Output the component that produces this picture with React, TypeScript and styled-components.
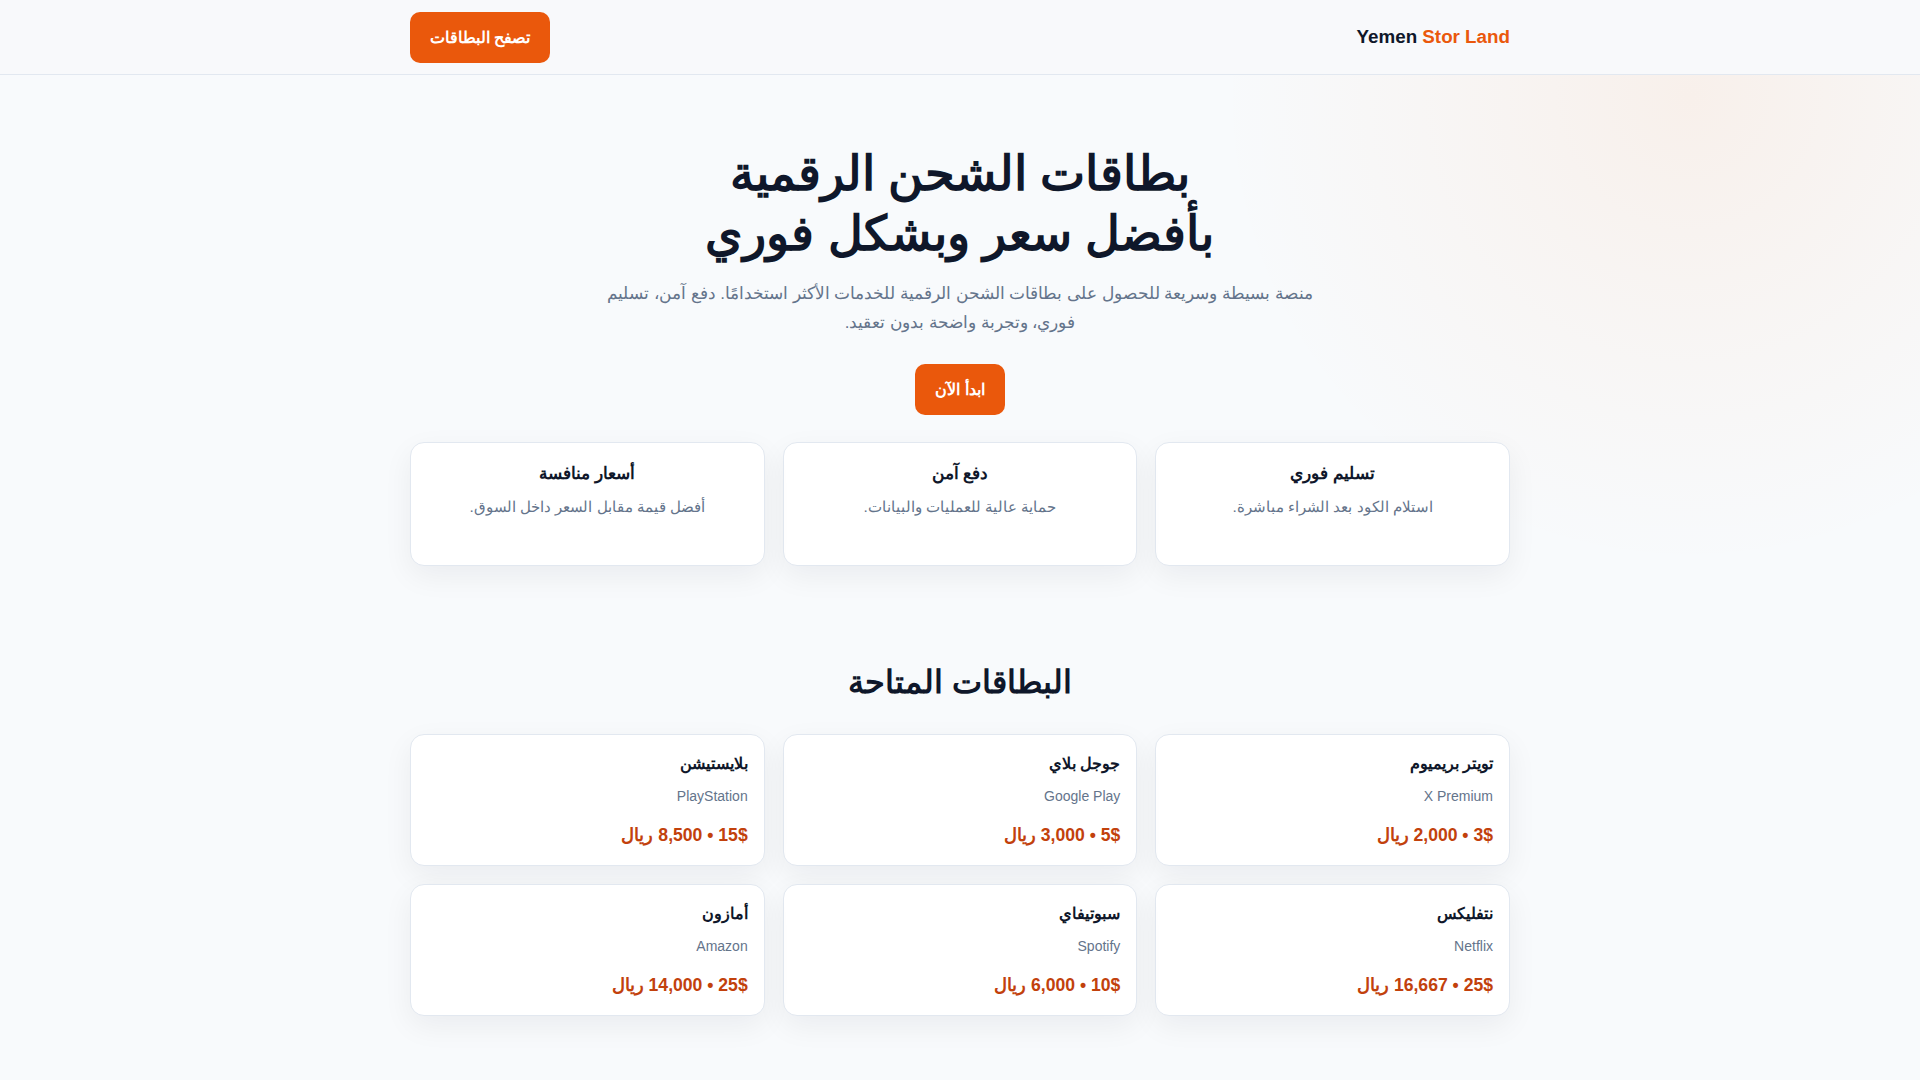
import React, { FC } from 'react';
import styled, { createGlobalStyle } from 'styled-components';

const GlobalStyle = createGlobalStyle`
  html, body {
    margin: 0;
    padding: 0;
    background: #f8fafc;
  }
  body {
    font-family: "Liberation Sans", Arial, sans-serif;
    color: #0f172a;
  }
  * {
    box-sizing: border-box;
  }
`;

const Page = styled.div`
  direction: rtl;
  min-height: 1080px;
  background:
    radial-gradient(circle at 88% 9%, rgba(249, 115, 22, 0.075), rgba(249, 115, 22, 0.03) 260px, rgba(249, 115, 22, 0) 470px),
    #f8fafc;
`;

const Header = styled.header`
  height: 75px;
  border-bottom: 1px solid #e2e8f0;
  background: #f8f9fb;
`;

const Container = styled.div`
  max-width: 1100px;
  margin: 0 auto;
  height: 100%;
`;

const HeaderRow = styled(Container)`
  display: flex;
  align-items: center;
  justify-content: space-between;
`;

const Logo = styled.div`
  font-size: 18.8px;
  font-weight: 700;
  color: #0f172a;
  direction: ltr;
  span {
    color: #ea580c;
  }
`;

const OrangeButton = styled.button`
  background: #ea580c;
  color: #fff;
  border: none;
  border-radius: 10px;
  font-family: inherit;
  font-size: 16px;
  font-weight: 700;
  line-height: 27px;
  padding: 12px 20px;
  cursor: pointer;
`;

const Hero = styled.section`
  padding: 69px 0 0;
  text-align: center;
`;

const Title = styled.h1`
  font-size: 48px;
  line-height: 60px;
  font-weight: 700;
  margin: 0 0 15px;
  color: #0f172a;
`;

const Lead = styled.p`
  max-width: 720px;
  margin: 0 auto 27px;
  font-size: 16.9px;
  line-height: 29px;
  color: #64748b;
`;

const Grid = styled.div`
  display: grid;
  grid-template-columns: repeat(3, 1fr);
  gap: 18px;
`;

const Card = styled.div`
  background: #fff;
  border: 1px solid #e2e8f0;
  border-radius: 14px;
  box-shadow: 0 10px 30px rgba(15, 23, 42, 0.06);
`;

const FeatureCard = styled(Card)`
  padding: 18px 20px 46px;
  text-align: center;
`;

const FeatureTitle = styled.h3`
  margin: 0 0 8px;
  font-size: 17px;
  line-height: 26px;
  font-weight: 700;
  color: #0f172a;
`;

const FeatureText = styled.p`
  margin: 0;
  font-size: 15.3px;
  line-height: 24px;
  color: #64748b;
`;

const FeaturesWrap = styled(Container)`
  margin-top: 27px;
`;

const Section = styled.section`
  padding: 96px 0 60px;
`;

const SectionTitle = styled.h2`
  margin: 0 0 32px;
  text-align: center;
  font-size: 32px;
  line-height: 40px;
  font-weight: 700;
  color: #0f172a;
`;

const ProductCard = styled(Card)`
  padding: 17px 16px 17px;
  text-align: right;
`;

const ProductName = styled.h3`
  margin: 0 0 10px;
  font-size: 16px;
  line-height: 24px;
  font-weight: 700;
  color: #0f172a;
`;

const ProductBrand = styled.div`
  font-size: 14px;
  line-height: 20px;
  color: #64748b;
`;

const Price = styled.div`
  margin-top: 16px;
  font-size: 17.6px;
  line-height: 26px;
  font-weight: 700;
  color: #c2410c;
`;

const features = [
  { title: 'تسليم فوري', text: 'استلام الكود بعد الشراء مباشرة.' },
  { title: 'دفع آمن', text: 'حماية عالية للعمليات والبيانات.' },
  { title: 'أسعار منافسة', text: 'أفضل قيمة مقابل السعر داخل السوق.' },
];

const products = [
  { name: 'تويتر بريميوم', brand: 'X Premium', usd: 3, yer: '2,000' },
  { name: 'جوجل بلاي', brand: 'Google Play', usd: 5, yer: '3,000' },
  { name: 'بلايستيشن', brand: 'PlayStation', usd: 15, yer: '8,500' },
  { name: 'نتفليكس', brand: 'Netflix', usd: 25, yer: '16,667' },
  { name: 'سبوتيفاي', brand: 'Spotify', usd: 10, yer: '6,000' },
  { name: 'أمازون', brand: 'Amazon', usd: 25, yer: '14,000' },
];

const App: FC = () => {
  return (
    <Page>
      <GlobalStyle />
      <Header>
        <HeaderRow>
          <Logo>
            Yemen <span>Stor Land</span>
          </Logo>
          <OrangeButton>تصفح البطاقات</OrangeButton>
        </HeaderRow>
      </Header>

      <Hero>
        <Container>
          <Title>
            بطاقات الشحن الرقمية
            <br />
            بأفضل سعر وبشكل فوري
          </Title>
          <Lead>
            منصة بسيطة وسريعة للحصول على بطاقات الشحن الرقمية للخدمات الأكثر استخدامًا. دفع آمن، تسليم فوري، وتجربة واضحة بدون تعقيد.
          </Lead>
          <OrangeButton>ابدأ الآن</OrangeButton>
        </Container>
        <FeaturesWrap>
          <Grid>
            {features.map((f) => (
              <FeatureCard key={f.title}>
                <FeatureTitle>{f.title}</FeatureTitle>
                <FeatureText>{f.text}</FeatureText>
              </FeatureCard>
            ))}
          </Grid>
        </FeaturesWrap>
      </Hero>

      <Section>
        <Container>
          <SectionTitle>البطاقات المتاحة</SectionTitle>
          <Grid>
            {products.map((p) => (
              <ProductCard key={p.brand}>
                <ProductName>{p.name}</ProductName>
                <ProductBrand>{p.brand}</ProductBrand>
                <Price>{`${p.usd}$ • ${p.yer} ريال`}</Price>
              </ProductCard>
            ))}
          </Grid>
        </Container>
      </Section>
    </Page>
  );
};

export default App;
